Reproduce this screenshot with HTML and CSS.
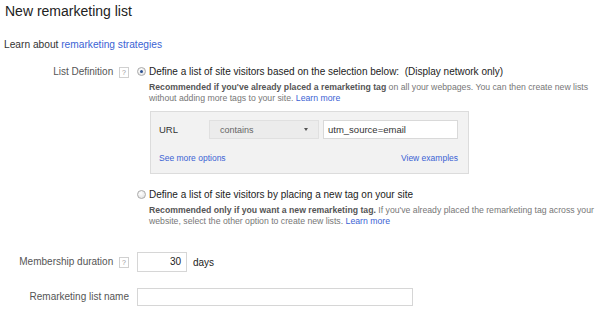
FILE: index.html
```html
<!DOCTYPE html>
<html>
<head>
<meta charset="utf-8">
<link rel="stylesheet" href="styles.css">
</head>
<body>
<div class="page">
  <h1 class="title">New remarketing list</h1>
  <p class="learn">Learn about <a class="link" href="#">remarketing strategies</a></p>

  <div class="row row-def">
    <div class="label">List Definition <span class="help">?</span></div>
    <div class="field">
      <div class="option">
        <span class="radio checked"></span>
        <span class="opt-text">Define a list of site visitors based on the selection below: &nbsp;(Display network only)</span>
      </div>
      <p class="desc"><b>Recommended if you've already placed a remarketing tag</b> on all your webpages. You can then create new lists without adding more tags to your site. <a class="link" href="#">Learn more</a></p>
      <div class="rulebox">
        <div class="rule">
          <span class="rule-label">URL</span>
          <div class="select"><span>contains</span><span class="caret"></span></div>
          <div class="textinput">utm_source=email</div>
        </div>
        <div class="rule-links">
          <a class="link" href="#">See more options</a>
          <a class="link" href="#">View examples</a>
        </div>
      </div>
      <div class="option option2">
        <span class="radio"></span>
        <span class="opt-text">Define a list of site visitors by placing a new tag on your site</span>
      </div>
      <p class="desc"><b>Recommended only if you want a new remarketing tag.</b> If you've already placed the remarketing tag across your website, select the other option to create new lists. <a class="link" href="#">Learn more</a></p>
    </div>
  </div>

  <div class="row row-dur">
    <div class="label">Membership duration <span class="help">?</span></div>
    <div class="field inline">
      <div class="numinput">30</div>
      <span class="days">days</span>
    </div>
  </div>

  <div class="row row-name">
    <div class="label">Remarketing list name</div>
    <div class="field">
      <div class="nameinput"></div>
    </div>
  </div>
</div>
</body>
</html>
```

FILE: styles.css
```css
html, body {
  margin: 0;
  padding: 0;
  background: #fff;
}
body {
  font-family: "Liberation Sans", Arial, sans-serif;
  font-size: 10px;
  color: #222;
}
.page {
  padding: 0 0 0 5px;
  width: 595px;
  overflow: hidden;
}
.title {
  margin: 0;
  padding-top: 2px;
  font-size: 14px;
  font-weight: normal;
  color: #222;
  line-height: 18px;
}
.learn {
  margin: 19px 0 0 -1px;
  font-size: 10.2px;
  line-height: 12px;
  color: #333;
}
.link {
  color: #3b63d4;
  text-decoration: none;
}
.row {
  display: grid;
  grid-template-columns: 124px 1fr;
  column-gap: 8px;
}
.label {
  text-align: right;
  color: #555;
  font-size: 10px;
  line-height: 12px;
  white-space: nowrap;
}
.help {
  display: inline-block;
  width: 8px;
  height: 9px;
  border: 1px solid #d0d0d0;
  font-size: 7px;
  line-height: 9px;
  text-align: center;
  color: #999;
  margin-left: 3px;
  vertical-align: 0;
}
.row-def {
  margin-top: 14px;
}
.row-def .label {
  padding-top: 1px;
}
.option {
  display: flex;
  align-items: center;
  gap: 3px;
  font-size: 10px;
  line-height: 13px;
  color: #222;
}
.radio {
  width: 7px;
  height: 7px;
  border-radius: 50%;
  border: 1px solid #aaa;
  background: radial-gradient(circle at 40% 35%, #fff 0, #e4e4e4 80%);
  flex: none;
  position: relative;
}
.radio.checked::after {
  content: "";
  position: absolute;
  left: 2px;
  top: 2px;
  width: 3px;
  height: 3px;
  border-radius: 50%;
  background: #2a4f8f;
}
.desc {
  margin: 4px 0 0 12px;
  width: 450px;
  font-size: 8.7px;
  line-height: 11px;
  color: #777;
}
.desc b {
  color: #555;
}
.rulebox {
  margin: 7px 0 0 13px;
  width: 319px;
  height: 63px;
  box-sizing: border-box;
  background: #f2f2f2;
  border: 1px solid #dcdcdc;
  padding: 8px 10px 0 8px;
}
.rule {
  display: flex;
  align-items: center;
}
.rule-label {
  width: 50px;
  color: #333;
  font-size: 9.5px;
}
.select {
  width: 110px;
  height: 19px;
  box-sizing: border-box;
  border: 1px solid #e0e0e0;
  background: #ececec;
  display: flex;
  align-items: center;
  justify-content: space-between;
  padding: 0 10px 0 10px;
  color: #666;
  font-size: 9px;
}
.caret {
  width: 0;
  height: 0;
  border-left: 2.5px solid transparent;
  border-right: 2.5px solid transparent;
  border-top: 3px solid #555;
}
.textinput {
  margin-left: 4px;
  width: 135px;
  height: 19px;
  box-sizing: border-box;
  border: 1px solid #d9d9d9;
  background: #fff;
  padding: 0 4px;
  line-height: 17px;
  font-size: 9.5px;
  color: #333;
}
.rule-links {
  display: flex;
  justify-content: space-between;
  margin-top: 14px;
  font-size: 8.5px;
}
.option2 {
  margin-top: 14px;
}
.row-dur {
  margin-top: 25px;
  align-items: center;
}
.inline {
  display: flex;
  align-items: center;
  gap: 6px;
}
.numinput {
  width: 50px;
  height: 20px;
  box-sizing: border-box;
  border: 1px solid #d6d6d6;
  text-align: right;
  padding-right: 5px;
  line-height: 18px;
  font-size: 10px;
  color: #222;
}
.days {
  font-size: 10px;
  color: #222;
}
.row-name {
  margin-top: 16px;
  align-items: center;
}
.nameinput {
  width: 276px;
  height: 18px;
  box-sizing: border-box;
  border: 1px solid #d6d6d6;
}
```
